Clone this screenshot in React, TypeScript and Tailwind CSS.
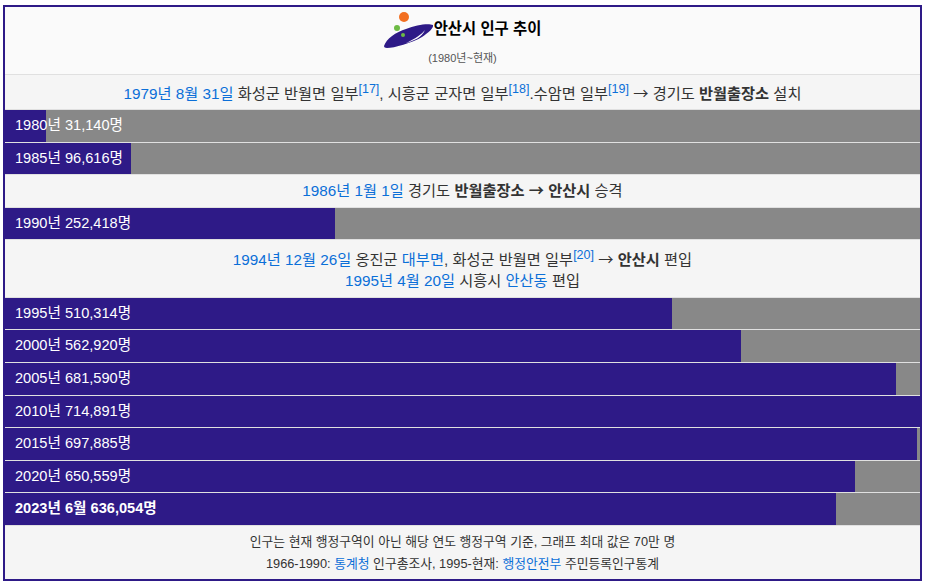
const FONT = "font-['Liberation_Sans','Noto_Sans_CJK_KR',sans-serif]";

const Link = ({ children }: { children: React.ReactNode }) => (
  <span className="text-[#0b6fd8]">{children}</span>
);

const Ref = ({ n }: { n: number }) => (
  <sup className="text-[12.5px] leading-none align-baseline relative -top-[6px] text-[#0b6fd8]">[{n}]</sup>
);

const Arrow = () => <span className="font-['Noto_Sans_CJK_KR',sans-serif]">→</span>;

const Bar = ({ label, value, bold }: { label: string; value: number; bold?: boolean }) => (
  <div className="relative h-[31.6px] bg-[#888888]">
    <div className="h-full bg-[#2e1a87]" style={{ width: `${Math.min((value / 700000) * 100, 100)}%` }} />
    <span className={`absolute left-[10px] top-0 leading-[30px] text-[14.6px] text-white ${bold ? "font-bold" : ""}`}>
      {label}
    </span>
  </div>
);

const Note = ({ children, className }: { children: React.ReactNode; className?: string }) => (
  <div className={`bg-[#f5f5f5] text-center text-[15.25px] text-[#333] ${className ?? ""}`}>{children}</div>
);

const Logo = () => (
  <svg width="50" height="36" viewBox="0 0 50 36" className="shrink-0">
    <circle cx="20" cy="5" r="5" fill="#f26f21" />
    <circle cx="13" cy="16" r="3" fill="#6dbb45" />
    <path d="M0 34 C2 27 12 20 22 17 C32 13 44 11 49 13 C50 16 44 21 38 25 C28 31 10 36 3 36 C1 36 0 35 0 34 Z" fill="#2e1a87" />
    <path d="M22 31 C30 29 38 25 41 18 C38 22 31 27 22 31 Z" fill="#ffffff" />
    <circle cx="19" cy="23" r="2" fill="#6dbb45" />
  </svg>
);

export default function App() {
  return (
    <div className={`${FONT} w-[925px] h-[584px] bg-white pt-[5px] pl-[3px]`}>
      <div className="w-[919px] h-[576px] border-2 border-[#2e1a87] flex flex-col bg-[#e0e0e0] gap-px">
        <div className="h-[67px] bg-[#fafafa] flex flex-col items-center">
          <div className="flex items-start h-[41px]">
            <div className="mt-[5px]"><Logo /></div>
            <span className="mt-[12px] text-[15.4px] font-bold leading-[20px] text-black">안산시 인구 추이</span>
          </div>
          <span className="mt-[3px] text-[11px] leading-[14px] text-[#555]">(1980년~현재)</span>
        </div>
        <Note className="h-[34px] leading-[35px]">
          <Link>1979년 8월 31일</Link> 화성군 반월면 일부<Ref n={17} />, 시흥군 군자면 일부<Ref n={18} />.수암면 일부<Ref n={19} /> <Arrow /> 경기도 <b>반월출장소</b> 설치
        </Note>
        <Bar label="1980년 31,140명" value={31140} />
        <Bar label="1985년 96,616명" value={96616} />
        <Note className="h-[31.6px] leading-[29px]">
          <Link>1986년 1월 1일</Link> 경기도 <b>반월출장소 <Arrow /> 안산시</b> 승격
        </Note>
        <Bar label="1990년 252,418명" value={252418} />
        <Note className="h-[56.4px] pt-[8px] leading-[21px]">
          <div>
            <Link>1994년 12월 26일</Link> 옹진군 <Link>대부면</Link>, 화성군 반월면 일부<Ref n={20} /> <Arrow /> <b>안산시</b> 편입
          </div>
          <div>
            <Link>1995년 4월 20일</Link> 시흥시 <Link>안산동</Link> 편입
          </div>
        </Note>
        <Bar label="1995년 510,314명" value={510314} />
        <Bar label="2000년 562,920명" value={562920} />
        <Bar label="2005년 681,590명" value={681590} />
        <Bar label="2010년 714,891명" value={714891} />
        <Bar label="2015년 697,885명" value={697885} />
        <Bar label="2020년 650,559명" value={650559} />
        <Bar label="2023년 6월 636,054명" value={636054} bold />
        <div className="flex-1 bg-[#f5f5f5] text-center text-[12.8px] leading-[22px] text-[#333] pt-[5px]">
          <div>인구는 현재 행정구역이 아닌 해당 연도 행정구역 기준, 그래프 최대 값은 70만 명</div>
          <div>
            1966-1990: <Link>통계청</Link> 인구총조사, 1995-현재: <Link>행정안전부</Link> 주민등록인구통계
          </div>
        </div>
      </div>
    </div>
  );
}
